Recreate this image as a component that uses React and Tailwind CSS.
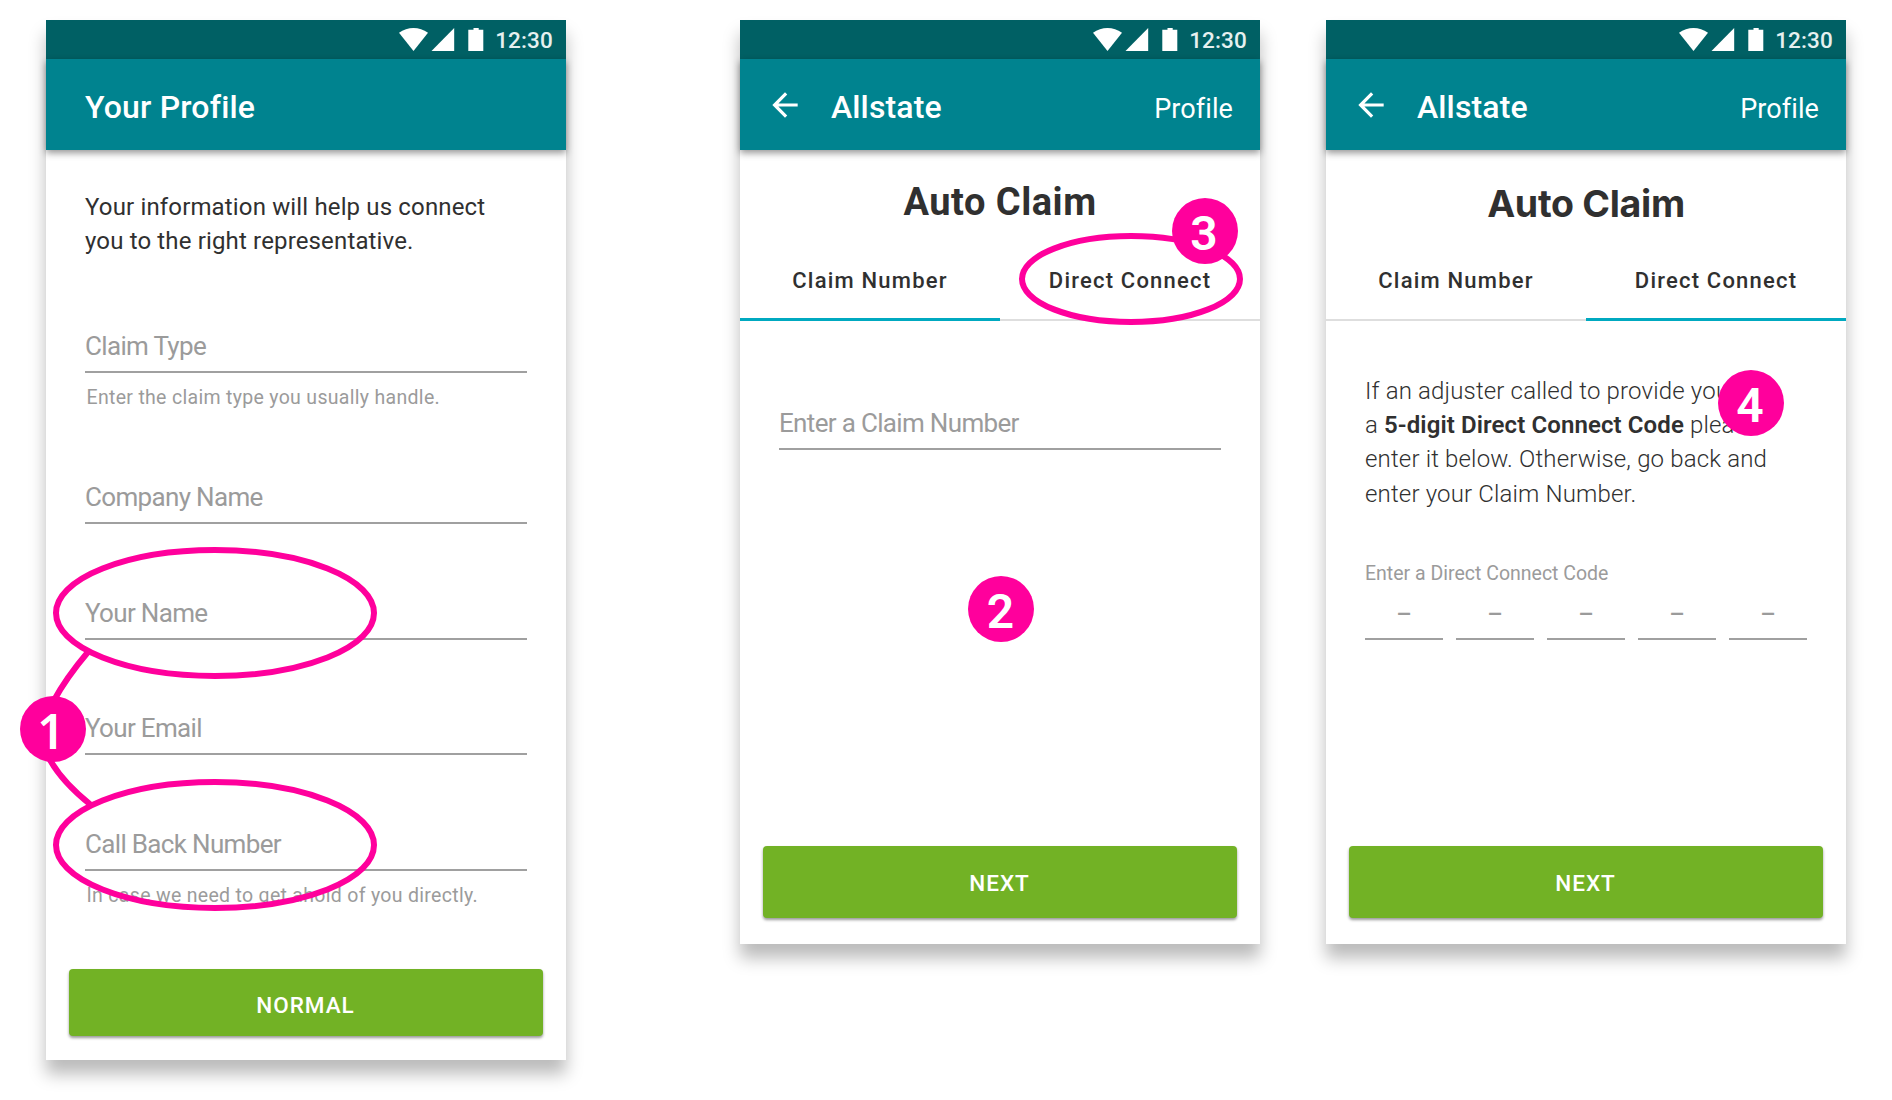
function StatusBar() {
  return (
    <div className="flex h-[39px] shrink-0 items-center justify-end gap-[11px] bg-[#006064] pr-[13px] text-white">
      <svg width="85" height="23" viewBox="0 0 85 23" fill="currentColor">
        <path d="M0 4.8C8.6-1.6 20.4-1.6 29 4.8L14.5 23Z" />
        <path d="M55.2 0V23H32.5Z" />
        <path d="M74.5 0h5.200v1.700h4.600V23h-15V1.700h5.200Z" />
      </svg>
      <span className="pt-px text-[22.500px] leading-[26px] font-medium tracking-[0.15px] text-[#e6f0f0]">12:30</span>
    </div>
  );
}

function AppBar({ title, back }) {
  return (
    <header className="flex h-[91px] shrink-0 items-center bg-[#00838f] text-white shadow-[0_3px_7px_rgba(0,0,0,0.42)]">
      {back ? (
        <svg width="38" height="38" viewBox="0 0 24 24" fill="currentColor" className="ml-[26px]">
          <path d="M20 11H7.830l5.590-5.590L12 4l-8 8 8 8 1.410-1.410L7.830 13H20v-2z" />
        </svg>
      ) : null}
      <h1
        className={
          back
            ? "ml-[27px] pt-1 text-[32px] leading-10 font-medium tracking-[0.12px]"
            : "ml-[39px] pt-1 text-[32px] leading-10 font-medium tracking-[0.18px]"
        }
      >
        {title}
      </h1>
      {back ? (
        <a className="mr-[27px] ml-auto pt-[8px] text-[27px] leading-8 tracking-[0.1px]">Profile</a>
      ) : null}
    </header>
  );
}

function Phone({ title, back, className, children }) {
  return (
    <section className={`flex w-[520px] shrink-0 flex-col bg-white shadow-[0_14px_16px_rgba(0,0,0,0.27)] ${className}`}>
      <StatusBar />
      <AppBar title={title} back={back} />
      {children}
    </section>
  );
}

function Field({ label, helper, className = "" }) {
  return (
    <div className={className}>
      <div className="h-[42px] border-b-2 border-[#a0a0a0] text-[26px] leading-[30px] tracking-[-0.67px] text-[#9b9b9b]">
        {label}
      </div>
      {helper ? (
        <p className="mt-[15px] pl-[1.500px] text-[19.500px] leading-5 tracking-[0.31px] text-[#9b9b9b]">{helper}</p>
      ) : null}
    </div>
  );
}

function ActionButton({ children, className }) {
  return (
    <button
      className={`mx-[23px] mt-auto flex shrink-0 items-center justify-center rounded-[4px] bg-[#72b225] pr-px text-[22.500px] leading-[26px] font-medium tracking-[1px] text-white shadow-[0_2px_3px_rgba(0,0,0,0.4)] ${className}`}
    >
      {children}
    </button>
  );
}

function Tab({ children, active }) {
  return (
    <div
      className={
        active
          ? "flex flex-1 justify-center border-b-[3px] border-[#00a9c0] pt-[7px]"
          : "flex flex-1 justify-center border-b-2 border-[#dedede] pt-[7px]"
      }
    >
      <span className="text-[22px] leading-[26px] font-medium tracking-[1.200px] text-[#303030]">{children}</span>
    </div>
  );
}

function ClaimHeading({ active, children }) {
  return (
    <div className="flex h-[171px] shrink-0 flex-col">
      {children}
      <div className="mt-auto flex h-[60px]">
        <Tab active={active === 0}>Claim Number</Tab>
        <Tab active={active === 1}>Direct Connect</Tab>
      </div>
    </div>
  );
}

function Badge({ children, className }) {
  return (
    <div
      className={`absolute flex size-[66px] items-center justify-center rounded-full bg-[#ff009c] text-[48px] leading-none text-white ${className}`}
    >
      {children}
    </div>
  );
}

function Annotations() {
  return (
    <div className="pointer-events-none absolute inset-0">
      <svg width="1892" height="1100" fill="none" stroke="#ff009c" strokeWidth="6">
        <ellipse cx="215" cy="613" rx="159" ry="63" />
        <ellipse cx="215" cy="845" rx="159" ry="63" />
        <ellipse cx="1131" cy="279" rx="109" ry="43" />
        <path d="M88 652Q66 678 53 702" />
        <path d="M49 758Q61 781 91 805" />
      </svg>
      <Badge className="top-[696px] left-[20px] pt-[3px] pr-1 font-['Noto_Sans',sans-serif] font-semibold">1</Badge>
      <Badge className="top-[576px] left-[968px] pt-[5px] pr-px font-semibold">2</Badge>
      <Badge className="top-[198px] left-[1172px] pt-[5px] pr-0.5 font-semibold">3</Badge>
      <Badge className="top-[370px] left-[1718px] pt-[5px] pr-0.5 font-semibold">4</Badge>
    </div>
  );
}

export default function App() {
  return (
    <main className="relative flex h-[1100px] w-[1892px] items-start overflow-hidden bg-white pt-5 pl-[46px] font-[Roboto,sans-serif]">
      <Phone title="Your Profile" className="h-[1040px]">
        <div className="px-[39px] pt-10">
          <p className="text-[24px] leading-[34px] tracking-[0.15px] text-[#303030]">
            Your information will help us connect
            <br />
            you to the right representative.
          </p>
          <Field label="Claim Type" helper="Enter the claim type you usually handle." className="mt-[73px]" />
          <Field label="Company Name" className="mt-[74px]" />
          <Field label="Your Name" className="mt-[73.500px]" />
          <Field label="Your Email" className="mt-[73.500px]" />
          <Field
            label="Call Back Number"
            helper="In case we need to get ahold of you directly."
            className="mt-[73.500px]"
          />
        </div>
        <ActionButton className="mb-6 h-[67px] pt-1">NORMAL</ActionButton>
      </Phone>

      <Phone title="Allstate" back className="ml-[174px] h-[924px]">
        <ClaimHeading active={0}>
          <h2 className="pt-[29px] text-center text-[38px] leading-[46px] font-bold tracking-[0.5px] text-[#303030]">
            Auto Claim
          </h2>
        </ClaimHeading>
        <Field label="Enter a Claim Number" className="mx-[39px] mt-[87px]" />
        <ActionButton className="mb-[26px] h-[72px] pt-px">NEXT</ActionButton>
      </Phone>

      <Phone title="Allstate" back className="ml-[66px] h-[924px]">
        <ClaimHeading active={1}>
          <h2 className="pt-[31px] text-center font-[Inter,sans-serif] text-[37.500px] leading-[46px] font-bold tracking-[-0.3px] text-[#303030]">
            Auto Claim
          </h2>
        </ClaimHeading>
        <div className="px-[39px] pt-[53px]">
          <p className="text-[24px] leading-[34.200px] font-light tracking-[0.16px] whitespace-nowrap text-[#303030]">
            If an adjuster called to provide you with
            <br />a <strong className="font-semibold tracking-[0.1px]">5-digit Direct Connect Code</strong> please
            <br />
            enter it below. Otherwise, go back and
            <br />
            enter your Claim Number.
          </p>
          <p className="mt-[51px] text-[19.500px] leading-6 text-[#9b9b9b]">Enter a Direct Connect Code</p>
          <div className="mt-4 grid grid-cols-5 gap-[13px]">
            {[0, 1, 2, 3, 4].map((digit) => (
              <div
                key={digit}
                className="h-[38px] border-b-2 border-[#a0a0a0] text-center text-[24px] leading-6 font-medium text-[#9b9b9b]"
              >
                –
              </div>
            ))}
          </div>
        </div>
        <ActionButton className="mb-[26px] h-[72px] pt-px">NEXT</ActionButton>
      </Phone>

      <Annotations />
    </main>
  );
}
